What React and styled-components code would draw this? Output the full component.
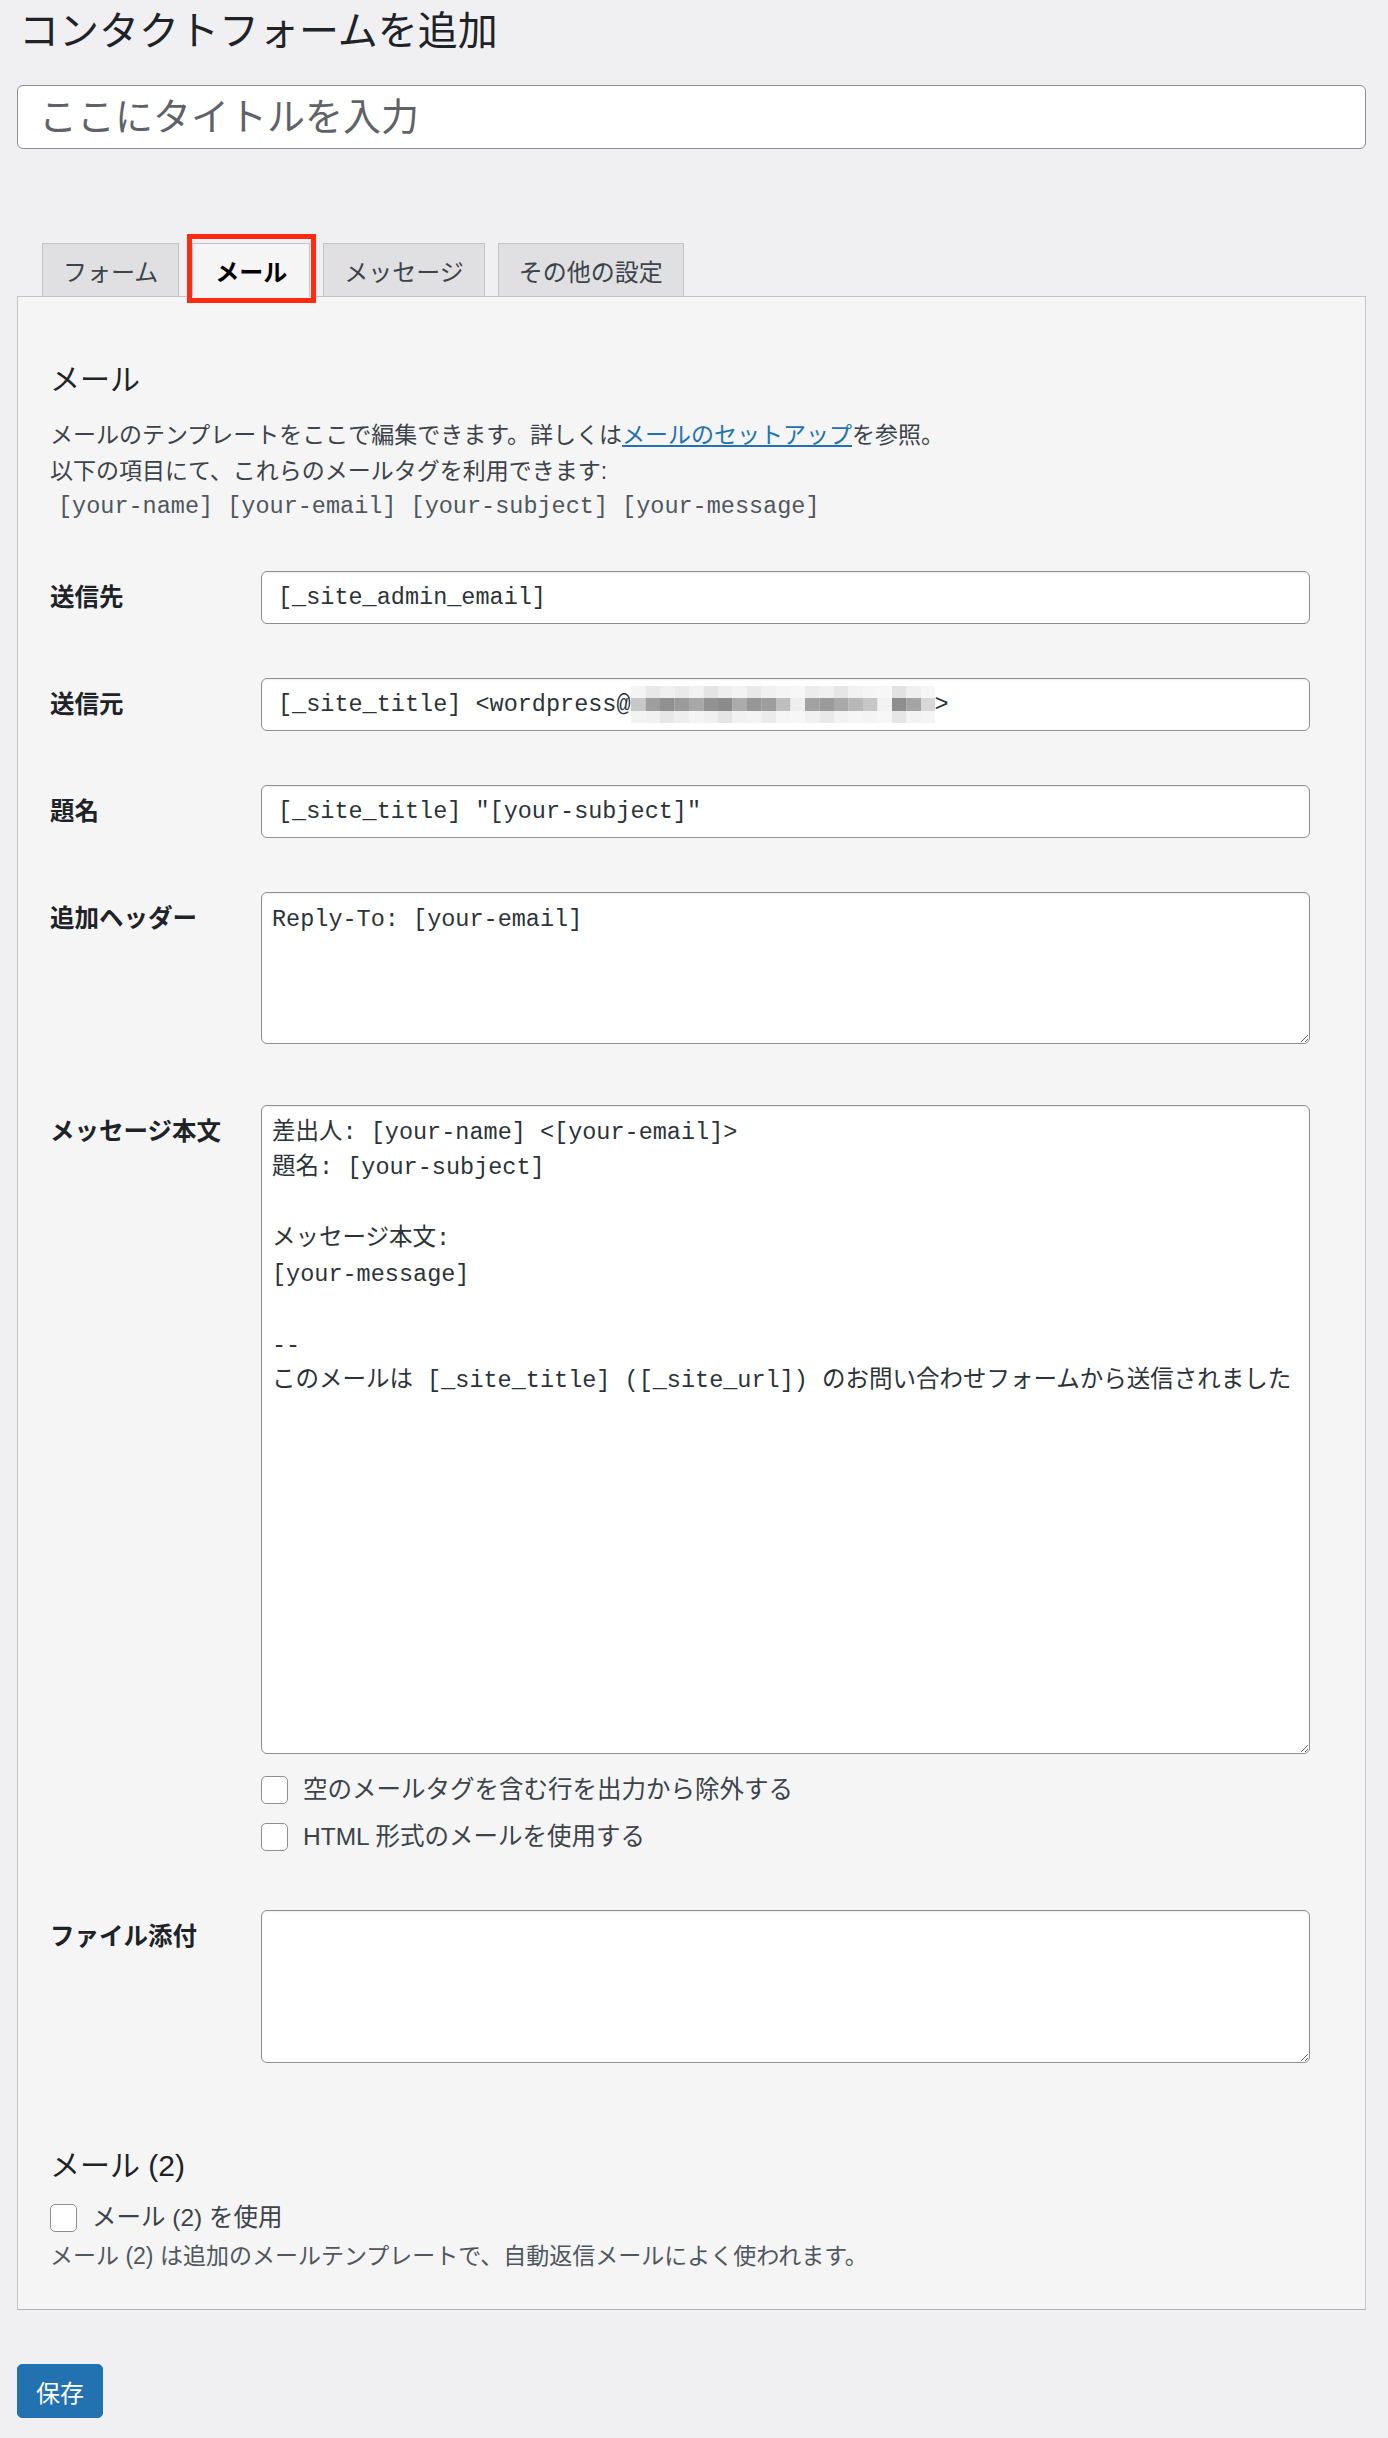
import React from "react";
import styled, { createGlobalStyle } from "styled-components";

const GlobalStyle = createGlobalStyle`
  html, body {
    margin: 0;
    padding: 0;
    background: #f0f0f2;
  }
  body {
    font-family: "Liberation Sans", "Noto Sans CJK JP", sans-serif;
    color: #1d2327;
  }
  * { box-sizing: border-box; }
`;

const jp = `"Liberation Sans", "Noto Sans CJK JP", sans-serif`;
const mono = `"Liberation Mono", "Noto Sans CJK JP", monospace`;

const Page = styled.div`
  min-height: 2438px;
  padding: 0 22px 21px 17px;
`;

const Title = styled.h1`
  margin: 0 0 23px 2px;
  font-family: ${jp};
  font-size: 40px;
  line-height: 62px;
  font-weight: 400;
  color: #1d2327;
`;

const TitleInput = styled.input`
  display: block;
  width: 100%;
  height: 64px;
  padding: 0 21px;
  border: 1px solid #8c8f94;
  border-radius: 6px;
  background: #fff;
  font-family: ${jp};
  font-size: 38px;
  color: #2c3338;
  outline: none;
  &::placeholder { color: #5f6368; }
`;

const Tabs = styled.div`
  position: relative;
  z-index: 1;
  display: flex;
  gap: 13px;
  margin: 94px 0 -1px;
  padding-left: 25px;
`;

const Tab = styled.div`
  position: relative;
  display: flex;
  align-items: center;
  height: 54px;
  padding: 0 ${(p) => (p.$active ? 22 : 20)}px;
  font-family: ${jp};
  font-size: 24px;
  border: 1px solid #c3c4c7;
  border-bottom-color: ${(p) => (p.$active ? "#f5f5f5" : "#c3c4c7")};
  background: ${(p) => (p.$active ? "#f5f5f5" : "#e0e0e2")};
  color: ${(p) => (p.$active ? "#000" : "#3c434a")};
  font-weight: ${(p) => (p.$active ? 700 : 400)};
  ${(p) =>
    p.$marked &&
    `&::after {
      content: "";
      position: absolute;
      top: -10px; left: -6px; right: -7px; bottom: -7px;
      border: 5px solid #ff2a12;
    }`}
`;

const Panel = styled.div`
  background: #f5f5f5;
  border: 1px solid #c3c4c7;
  border-bottom-color: #b0b1b4;
  padding: 63px 55px 35px 32px;
`;

const SectionTitle = styled.h2`
  margin: ${(p) => p.$top || 0}px 0 0;
  font-family: ${jp};
  font-size: 30px;
  line-height: 40px;
  font-weight: 400;
  color: #1d2327;
`;

const Intro = styled.div`
  margin-top: 18px;
  font-size: 23px;
  line-height: 35.5px;
  color: #3c434a;
  a { color: #2271b1; text-decoration: underline; }
`;

const Tags = styled.div`
  padding-left: 8px;
  font-family: ${mono};
  font-size: 23.5px;
  color: #50575e;
`;

const Fields = styled.div`
  display: flex;
  flex-direction: column;
  margin-top: 46px;
`;

const FieldRow = styled.div`
  display: grid;
  grid-template-columns: 211px 1fr;
  margin-top: ${(p) => p.$gap || 0}px;
`;

const FieldLabel = styled.label`
  padding-top: 11px;
  font-family: ${jp};
  font-size: 24.5px;
  line-height: 32px;
  font-weight: 700;
  color: #1d2327;
`;

const TextField = styled.div`
  display: flex;
  align-items: center;
  height: 53px;
  padding: 0 16px;
  border: 1px solid #8c8f94;
  border-radius: 6px;
  background: #fff;
  box-shadow: inset 0 1px 2px rgba(0, 0, 0, 0.07);
  font-family: ${mono};
  font-size: 23.5px;
  color: #2c3338;
  white-space: pre;
  overflow: hidden;
`;

const TextArea = styled.textarea`
  display: block;
  width: 100%;
  height: ${(p) => p.$h}px;
  padding: 9px 10px;
  border: 1px solid #8c8f94;
  border-radius: 6px;
  background: #fff;
  box-shadow: inset 0 1px 2px rgba(0, 0, 0, 0.07);
  font-family: ${mono};
  font-size: 23.5px;
  line-height: 35.5px;
  color: #2c3338;
  overflow: hidden;
  outline: none;
`;

const CheckList = styled.div`
  display: flex;
  flex-direction: column;
  gap: 19px;
  margin-top: 22px;
`;

const CheckRow = styled.label`
  display: flex;
  align-items: center;
  gap: 15px;
  margin-top: ${(p) => p.$top || 0}px;
  font-family: ${jp};
  font-size: 24.5px;
  line-height: 28px;
  color: #3c434a;
`;

const Box = styled.input.attrs({ type: "checkbox" })`
  appearance: none;
  flex: none;
  width: 27px;
  height: 28px;
  margin: 0;
  border: 1px solid #8c8f94;
  border-radius: 5px;
  background: #fff;
`;

const Note = styled.p`
  margin: 7px 0 0;
  font-size: 23px;
  line-height: 35.5px;
  color: #50575e;
`;

const SaveButton = styled.button`
  display: block;
  margin-top: 54px;
  height: 54px;
  padding: 0 18px;
  border: 1px solid #2271b1;
  border-radius: 5px;
  background: #2271b1;
  color: #fff;
  font-family: ${jp};
  font-size: 24px;
`;

const Mosaic = styled.svg`
  flex: none;
`;

const mid = [0xc8, 0x9e, 0x90, 0x9a, 0xa8, 0x92, 0x8c, 0xab, 0x96, 0x9d, 0xbe, 0xee, 0xa2, 0x9a, 0xa9, 0xb8, 0xc6, 0xf2, 0x8e, 0xa4, 0xd8];
const top = [0xf4, 0xe8, 0xf0, 0xea, 0xf2, 0xe4, 0xee, 0xf3, 0xe9, 0xf1, 0xf5, 0xf7, 0xec, 0xf0, 0xe6, 0xf2, 0xf5, 0xf7, 0xe2, 0xf0, 0xf6];
const bottom = [0xf3, 0xf1, 0xe7, 0xee, 0xf4, 0xf0, 0xe5, 0xf2, 0xf4, 0xeb, 0xf6, 0xf7, 0xf1, 0xe9, 0xf3, 0xf6, 0xf4, 0xf7, 0xe6, 0xf3, 0xf5];
const gray = (v) => `rgb(${v},${v},${v})`;

function Redacted() {
  return (
    <Mosaic width="304" height="37" viewBox="0 0 304 37">
      {mid.map((v, i) => (
        <g key={i}>
          <rect x={i * 14.5} y="0" width="14.6" height="12" fill={gray(top[i])} />
          <rect x={i * 14.5} y="12" width="14.6" height="13" fill={gray(v)} />
          <rect x={i * 14.5} y="25" width="14.6" height="12" fill={gray(bottom[i])} />
        </g>
      ))}
    </Mosaic>
  );
}

const body = `差出人: [your-name] <[your-email]>
題名: [your-subject]

メッセージ本文:
[your-message]

--
このメールは [_site_title] ([_site_url]) のお問い合わせフォームから送信されました`;

export default function App() {
  return (
    <Page>
      <GlobalStyle />
      <Title>コンタクトフォームを追加</Title>
      <TitleInput placeholder="ここにタイトルを入力" />

      <Tabs>
        <Tab>フォーム</Tab>
        <Tab $active $marked>メール</Tab>
        <Tab>メッセージ</Tab>
        <Tab>その他の設定</Tab>
      </Tabs>

      <Panel>
        <SectionTitle>メール</SectionTitle>
        <Intro>
          メールのテンプレートをここで編集できます。詳しくは<a href="#mail">メールのセットアップ</a>を参照。
          <br />
          以下の項目にて、これらのメールタグを利用できます:
          <Tags>[your-name] [your-email] [your-subject] [your-message]</Tags>
        </Intro>

        <Fields>
          <FieldRow>
            <FieldLabel>送信先</FieldLabel>
            <TextField>[_site_admin_email]</TextField>
          </FieldRow>
          <FieldRow $gap={54}>
            <FieldLabel>送信元</FieldLabel>
            <TextField>
              {"[_site_title] <wordpress@"}
              <Redacted />
              {">"}
            </TextField>
          </FieldRow>
          <FieldRow $gap={54}>
            <FieldLabel>題名</FieldLabel>
            <TextField>[_site_title] "[your-subject]"</TextField>
          </FieldRow>
          <FieldRow $gap={54}>
            <FieldLabel>追加ヘッダー</FieldLabel>
            <TextArea $h={152} defaultValue="Reply-To: [your-email]" />
          </FieldRow>
          <FieldRow $gap={61}>
            <FieldLabel>メッセージ本文</FieldLabel>
            <div>
              <TextArea $h={649} defaultValue={body} />
              <CheckList>
                <CheckRow>
                  <Box />
                  空のメールタグを含む行を出力から除外する
                </CheckRow>
                <CheckRow>
                  <Box />
                  HTML 形式のメールを使用する
                </CheckRow>
              </CheckList>
            </div>
          </FieldRow>
          <FieldRow $gap={59}>
            <FieldLabel>ファイル添付</FieldLabel>
            <TextArea $h={153} defaultValue="" />
          </FieldRow>
        </Fields>

        <SectionTitle $top={83}>メール (2)</SectionTitle>
        <CheckRow $top={18}>
          <Box />
          メール (2) を使用
        </CheckRow>
        <Note>メール (2) は追加のメールテンプレートで、自動返信メールによく使われます。</Note>
      </Panel>

      <SaveButton>保存</SaveButton>
    </Page>
  );
}
